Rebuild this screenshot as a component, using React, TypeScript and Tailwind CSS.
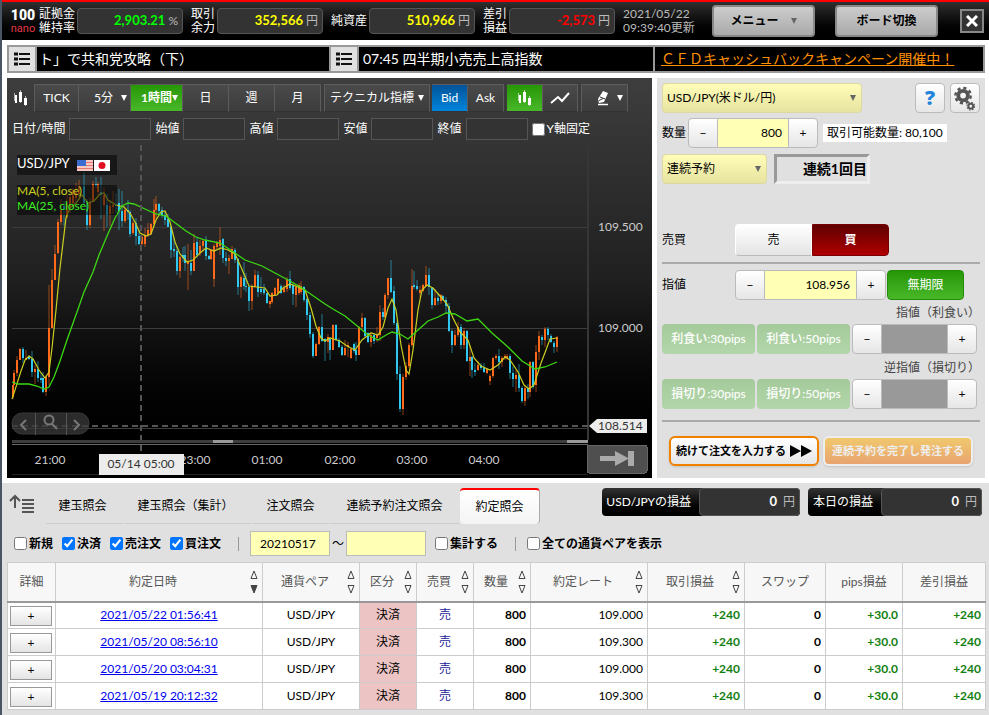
import type { ReactNode } from "react";
import clsx from "clsx";

type Candle = [x: number, wickTop: number, top: number, bottom: number, wickBottom: number, up: 0 | 1];

// x, high, body top, body bottom, low, rising
const candles: Candle[] = [
  [12, 385, 385, 397, 399, 1], [13, 370, 373, 385, 385, 1], [16, 356, 360, 373, 376, 1], [19, 348, 349, 360, 360, 1],
  [22, 347, 349, 358, 363, 0], [25, 350, 358, 360, 360, 1], [28, 355, 357, 359, 360, 0], [31, 351, 359, 372, 377, 0],
  [34, 365, 369, 372, 384, 1], [37, 361, 369, 378, 382, 0], [40, 373, 378, 380, 383, 0], [42, 372, 378, 392, 393, 0],
  [45, 375, 377, 392, 396, 1], [48, 285, 328, 377, 385, 1], [51, 269, 280, 328, 328, 1], [54, 245, 254, 280, 280, 1],
  [57, 219, 222, 253, 254, 1], [60, 199, 210, 222, 225, 1], [63, 201, 206, 209, 226, 0], [66, 195, 203, 215, 218, 1],
  [69, 190, 197, 207, 213, 1], [72, 188, 190, 203, 207, 1], [75, 183, 192, 198, 204, 1], [78, 180, 186, 194, 200, 1],
  [83, 172, 186, 203, 205, 0], [86, 199, 203, 225, 230, 0], [89, 198, 202, 225, 228, 1], [92, 181, 184, 202, 202, 1],
  [95, 177, 184, 185, 188, 0], [97, 182, 184, 192, 196, 1], [100, 177, 192, 195, 219, 0], [103, 187, 195, 205, 231, 1],
  [106, 194, 205, 215, 227, 0], [109, 200, 206, 214, 226, 1], [112, 191, 205, 207, 214, 1], [115, 193, 204, 206, 213, 0],
  [118, 189, 203, 211, 230, 0], [121, 191, 211, 221, 227, 0], [124, 208, 210, 221, 223, 1], [127, 200, 210, 212, 220, 0],
  [129, 210, 212, 234, 237, 0], [132, 221, 223, 233, 235, 1], [135, 218, 223, 236, 245, 0], [138, 230, 236, 244, 245, 0],
  [141, 236, 237, 244, 245, 1], [144, 228, 235, 244, 247, 1], [147, 223, 230, 235, 237, 1], [150, 223, 224, 234, 235, 1],
  [153, 199, 210, 224, 227, 1], [155, 196, 204, 210, 219, 1], [158, 203, 204, 211, 215, 0], [161, 207, 210, 215, 218, 0],
  [164, 211, 215, 220, 225, 0], [167, 214, 219, 227, 227, 0], [170, 225, 227, 250, 258, 0], [173, 238, 249, 251, 257, 0],
  [176, 246, 251, 271, 275, 0], [179, 256, 257, 271, 278, 1], [182, 247, 255, 258, 262, 0], [184, 246, 255, 263, 271, 0],
  [187, 244, 262, 264, 290, 1], [190, 250, 263, 271, 275, 0], [193, 234, 243, 271, 271, 1], [196, 237, 242, 255, 258, 0],
  [199, 240, 246, 253, 256, 1], [202, 240, 241, 246, 250, 1], [205, 236, 240, 256, 260, 0], [208, 255, 256, 259, 260, 0],
  [210, 249, 250, 259, 260, 1], [213, 244, 246, 279, 287, 1], [216, 241, 243, 247, 250, 1], [219, 227, 240, 246, 255, 1],
  [222, 238, 239, 258, 263, 0], [225, 252, 258, 261, 266, 0], [228, 255, 258, 261, 274, 1], [231, 246, 249, 259, 259, 1],
  [234, 248, 250, 260, 263, 0], [237, 258, 259, 287, 295, 0], [240, 275, 277, 287, 298, 1], [243, 262, 278, 286, 290, 0],
  [245, 273, 286, 287, 292, 0], [248, 286, 287, 301, 311, 0], [251, 284, 286, 301, 310, 1], [254, 270, 275, 286, 287, 1],
  [257, 271, 275, 292, 297, 0], [260, 277, 289, 292, 294, 0], [263, 284, 289, 293, 295, 0], [266, 293, 293, 303, 304, 0],
  [269, 301, 301, 304, 308, 1], [271, 292, 293, 302, 304, 1], [274, 287, 288, 295, 296, 1], [277, 278, 279, 293, 294, 1],
  [280, 284, 286, 293, 294, 0], [283, 285, 288, 292, 293, 1], [286, 277, 279, 289, 292, 1], [289, 271, 279, 288, 290, 0],
  [292, 283, 285, 294, 305, 0], [295, 284, 287, 295, 307, 1], [298, 283, 285, 293, 295, 1], [300, 281, 286, 292, 294, 1],
  [303, 286, 287, 300, 302, 0], [306, 297, 299, 315, 320, 0], [309, 312, 315, 334, 338, 0], [312, 332, 334, 356, 358, 0],
  [315, 343, 344, 356, 356, 1], [318, 326, 327, 344, 345, 1], [321, 314, 327, 341, 342, 0], [324, 338, 339, 342, 361, 0],
  [327, 334, 337, 342, 353, 1], [329, 337, 339, 350, 360, 0], [332, 324, 325, 350, 350, 1], [335, 324, 325, 340, 341, 0],
  [338, 338, 340, 347, 348, 0], [341, 345, 347, 355, 356, 0], [344, 340, 348, 355, 356, 1], [347, 342, 345, 347, 357, 1],
  [350, 348, 349, 358, 359, 1], [353, 343, 344, 351, 353, 0], [355, 342, 350, 355, 361, 0], [358, 326, 327, 355, 355, 1],
  [361, 313, 318, 327, 329, 1], [364, 317, 318, 336, 337, 0], [367, 332, 333, 342, 343, 0], [370, 332, 335, 342, 347, 1],
  [373, 333, 335, 341, 344, 0], [376, 327, 335, 338, 342, 1], [379, 305, 312, 335, 341, 1], [382, 308, 312, 317, 320, 0],
  [384, 293, 295, 317, 318, 1], [387, 278, 278, 295, 299, 1], [390, 260, 278, 292, 293, 0], [393, 286, 291, 323, 325, 0],
  [396, 321, 323, 374, 380, 0], [399, 366, 374, 409, 412, 0], [402, 374, 377, 409, 415, 1], [405, 362, 366, 377, 380, 1],
  [408, 343, 345, 366, 368, 1], [411, 269, 286, 345, 347, 1], [413, 271, 285, 287, 289, 0], [416, 280, 286, 289, 291, 0],
  [419, 286, 290, 293, 298, 1], [422, 284, 285, 291, 292, 1], [425, 266, 275, 286, 287, 1], [428, 268, 275, 287, 295, 0],
  [431, 287, 288, 305, 309, 0], [434, 289, 298, 305, 306, 1], [437, 293, 298, 301, 305, 0], [440, 294, 295, 301, 304, 1],
  [442, 295, 296, 300, 301, 0], [445, 297, 300, 306, 313, 0], [448, 303, 306, 331, 332, 0], [451, 329, 331, 345, 353, 0],
  [454, 330, 335, 345, 346, 1], [457, 322, 327, 335, 337, 1], [460, 324, 327, 345, 349, 0], [463, 328, 331, 345, 349, 1],
  [466, 330, 331, 361, 362, 0], [469, 345, 357, 361, 376, 1], [471, 356, 357, 370, 378, 0], [474, 363, 370, 372, 376, 0],
  [477, 361, 365, 370, 371, 1], [480, 363, 365, 368, 370, 0], [483, 363, 368, 372, 373, 0], [486, 368, 369, 373, 374, 1],
  [489, 374, 376, 381, 385, 1], [492, 357, 358, 376, 378, 1], [495, 354, 356, 358, 360, 1], [498, 349, 356, 362, 369, 0],
  [501, 356, 358, 362, 367, 1], [504, 354, 356, 358, 360, 1], [506, 354, 356, 358, 359, 1], [509, 354, 356, 373, 379, 0],
  [512, 366, 373, 379, 387, 0], [515, 370, 375, 379, 392, 1], [518, 364, 375, 388, 392, 0], [521, 386, 388, 401, 403, 0],
  [524, 386, 388, 401, 406, 1], [527, 384, 388, 392, 399, 0], [529, 361, 362, 392, 397, 1], [532, 361, 362, 387, 389, 0],
  [535, 345, 352, 385, 392, 1], [538, 331, 336, 352, 360, 1], [541, 335, 337, 340, 345, 0], [544, 327, 329, 340, 347, 1],
  [547, 327, 329, 335, 340, 0], [550, 334, 336, 342, 343, 0], [553, 341, 343, 347, 353, 0], [556, 336, 337, 347, 352, 1],
];

const ma5 =
  "12,399 15,390 21,371 25,360 29,356 33,359 39,370 45,378 49,372 52,348 56,310 60,268 66,218 70,208 76,203 82,195 88,203 94,201 100,194 104,193 108,200 116,205 124,207 130,213 135,222 140,233 146,236 151,234 156,220 161,212 165,211 170,222 175,242 180,254 187,262 193,260 200,253 206,248 214,251 221,248 228,250 235,254 241,267 249,286 257,287 265,288 270,296 277,295 283,288 290,284 298,287 305,290 311,308 316,326 321,338 325,341 330,338 340,341 347,346 355,350 362,340 371,333 378,335 383,327 388,308 392,299 396,310 401,345 406,370 409,374 413,350 418,310 422,290 427,285 433,288 440,296 447,304 453,318 460,332 468,340 474,358 481,366 490,370 498,365 505,357 510,360 518,372 524,385 529,389 534,385 541,363 546,350 550,339 557,338";

const ma25 =
  "12,382 18,384 29,384 37,386 44,389 49,387 54,377 60,361 67,340 77,312 84,292 93,272 99,255 107,236 115,218 122,206 128,203 134,204 145,209 156,214 166,216 174,222 186,231 196,237 205,240 220,243 232,251 245,260 262,266 275,273 290,281 302,288 312,295 325,304 333,309 345,316 356,325 368,335 378,340 386,335 392,332 400,334 408,339 418,330 428,321 438,317 446,313 455,314 467,321 478,319 492,333 508,347 522,361 535,369 545,367 557,362";

const times = [
  { x: 50, label: "21:00" },
  { x: 195, label: "23:00" },
  { x: 267, label: "01:00" },
  { x: 340, label: "02:00" },
  { x: 412, label: "03:00" },
  { x: 484, label: "04:00" },
];

const trades = [
  { date: "2021/05/22 01:56:41", rate: "109.000" },
  { date: "2021/05/20 08:56:10", rate: "109.300" },
  { date: "2021/05/20 03:04:31", rate: "109.000" },
  { date: "2021/05/19 20:12:32", rate: "109.300" },
];

const columns = [
  { label: "詳細", width: 48 },
  { label: "約定日時", width: 207, sort: "desc" },
  { label: "通貨ペア", width: 97, sort: "none" },
  { label: "区分", width: 57, sort: "none" },
  { label: "売買", width: 57, sort: "none" },
  { label: "数量", width: 57, sort: "none" },
  { label: "約定レート", width: 117, sort: "none" },
  { label: "取引損益", width: 97, sort: "none" },
  { label: "スワップ", width: 81 },
  { label: "pips損益", width: 77 },
  { label: "差引損益", width: 83 },
];

const lightButton = "border border-[#bbb] bg-linear-to-b from-white to-[#e6e6e6]";

function Caret({ className }: { className?: string }) {
  return (
    <svg viewBox="0 0 6 6" className={clsx("h-1.5 w-1.5", className)} fill="currentColor">
      <path d="M0 0h6L3 6z" />
    </svg>
  );
}

function CandleIcon() {
  return (
    <svg viewBox="0 0 14 16" className="h-4 w-3.5" fill="#fff" shapeRendering="crispEdges">
      <path d="M1 5h2v8H1zM5 2h3v10H5zM10 8h3v7h-3z" />
      <path d="M0 3h1v8H0zM6 0h1v13H6zM11 6h1v10h-1z" opacity=".6" />
    </svg>
  );
}

function Summary({ label, value, unit, color }: { label: ReactNode; value: string; unit: string; color: string }) {
  return (
    <div className="flex items-center gap-0.5">
      <span className="leading-[14px] whitespace-nowrap">{label}</span>
      <span className="flex h-[26px] w-[106px] items-center justify-end gap-[3px] rounded-sm border border-[#555] bg-[#333] px-1">
        <b className={clsx("text-[13px]", color)}>{value}</b>
        <span className="text-[#bbb]">{unit}</span>
      </span>
    </div>
  );
}

function NewsButton() {
  return (
    <button aria-label="ニュース一覧" className="flex h-6 w-[26px] shrink-0 items-center justify-center bg-[#e0e0e0]">
      <svg viewBox="0 0 16 14" className="h-3.5 w-4" stroke="#111" strokeWidth="2">
        <path d="M5 2h11M5 7h11M5 12h11" />
        <path d="M0 2h4M0 7h4M0 12h4" strokeWidth="3" />
      </svg>
    </button>
  );
}

function ToolButton({ children, className }: { children: ReactNode; className: string }) {
  return (
    <button
      className={clsx(
        "flex h-7 shrink-0 items-center justify-center border-t border-r border-b border-t-[#5c5c5c] border-r-[#5c5c5c] border-b-[#333] whitespace-nowrap",
        className,
      )}
    >
      {children}
    </button>
  );
}

const tool = "bg-linear-to-b from-[#4a4a4a] to-[#3c3c3c]";
const green = "bg-linear-to-b from-[#269704] to-[#48b828]";

function PriceField({ id, label, className }: { id: string; label: string; className: string }) {
  return (
    <div className="flex shrink-0 items-center gap-1">
      <label htmlFor={id} className="whitespace-nowrap">{label}</label>
      <input id={id} readOnly className={clsx("h-[22px] border border-[#555] bg-[#333]", className)} />
    </div>
  );
}

function Chart() {
  return (
    <section className="min-w-0 flex-1 overflow-hidden bg-linear-to-b from-[#3e3e3e] via-[#202020] to-black text-white">
      <div className="flex pt-1.5 pl-[5px]">
        <div className="flex w-[22px] items-center pl-0.5"><CandleIcon /></div>
        <ToolButton className={clsx(tool, "w-[45px] border-l border-l-[#5c5c5c]")}>TICK</ToolButton>
        <ToolButton className={clsx(tool, "w-[52px] gap-2 pl-3")}>5分<Caret /></ToolButton>
        <ToolButton className={clsx(green, "w-[52px] pl-1.5 font-bold")}>1時間<Caret /></ToolButton>
        <ToolButton className={clsx(tool, "w-[46px]")}>日</ToolButton>
        <ToolButton className={clsx(tool, "w-[46px]")}>週</ToolButton>
        <ToolButton className={clsx(tool, "w-[46px]")}>月</ToolButton>
        <ToolButton className={clsx(tool, "ml-[3px] w-[106px] gap-1 border-l border-l-[#5c5c5c]")}>テクニカル指標<Caret /></ToolButton>
        <ToolButton className="ml-0.5 w-9 bg-linear-to-b from-[#005499] to-[#0085dc]">Bid</ToolButton>
        <ToolButton className={clsx(tool, "w-9")}>Ask</ToolButton>
        <ToolButton className={clsx(green, "ml-[3px] w-9")}><CandleIcon /></ToolButton>
        <ToolButton className={clsx(tool, "w-[35px]")}>
          <svg viewBox="0 0 20 14" className="h-3.5 w-5" fill="none" stroke="#fff" strokeWidth="2">
            <path d="M1 12l7-6 4 4 7-8" />
          </svg>
        </ToolButton>
        <ToolButton className={clsx(tool, "ml-[3px] w-[47px] gap-2 border-l border-l-[#5c5c5c] pl-2.5")}>
          <svg viewBox="0 0 12 15" className="h-[15px] w-3">
            <path d="M6 0l5 2-4 9-5 1-1-4z" fill="#fff" />
            <path d="M3 6l5 2M2 9.500l4-2" stroke="#333" />
            <path d="M1 13.500h10" stroke="#fff" strokeWidth="1.500" />
          </svg>
          <Caret />
        </ToolButton>
      </div>
      <div className="flex items-center gap-1 pt-1.5 pl-[5px]">
        <PriceField id="datetime" label="日付/時間" className="w-[82px]" />
        <PriceField id="open" label="始値" className="w-[62px]" />
        <PriceField id="high" label="高値" className="w-[62px]" />
        <PriceField id="low" label="安値" className="w-[62px]" />
        <PriceField id="close" label="終値" className="w-[62px]" />
        <label className="flex items-center gap-0.5 whitespace-nowrap">
          <input type="checkbox" className="h-[13px] w-[13px]" />
          Y軸固定
        </label>
      </div>
      <svg viewBox="7 140 645 338" className="h-[338px] w-full" preserveAspectRatio="xMinYMin meet" shapeRendering="crispEdges">
        <path d="M12 227h576M12 328h576M12 428h576" stroke="#3c3c3c" strokeWidth="1" />
        <rect x="587" y="145" width="2" height="295" fill="#363636" />
        {candles.map(([x, wickTop, top, bottom, wickBottom, up]) => (
          <g key={x} fill={up ? "#ff6a1a" : "#30c8f0"}>
            <rect x={x} y={wickTop} width="2" height={wickBottom - wickTop} opacity=".28" />
            <rect x={x} y={top} width="2" height={bottom - top} />
          </g>
        ))}
        <g fill="none" shapeRendering="auto">
          <polyline points={ma5} stroke="#cbd020" strokeWidth="1.2" />
          <polyline points={ma25} stroke="#3cd812" strokeWidth="1.3" />
        </g>
        <path d="M141 145v306M12 426h576" stroke="#555" strokeWidth="2" strokeDasharray="6 4" />
        <g fill="#000" opacity=".5">
          <rect x="17" y="155" width="100" height="20" />
          <rect x="17" y="185" width="100" height="30" />
        </g>
        <g fontSize="12">
          <text x="17" y="168" fontSize="13" fill="#fff">USD/JPY</text>
          <text x="17" y="195" fill="#cbd020">MA(5, close)</text>
          <text x="17" y="210" fill="#3cee22">MA(25, close)</text>
        </g>
        <g>
          <rect x="77" y="160" width="16" height="11" fill="#f7c9c4" />
          <path d="M77 162h16M77 165h16M77 168h16" stroke="#e5776c" />
          <rect x="77" y="160" width="9" height="6" fill="#3d6cd0" />
          <rect x="94" y="160" width="16" height="11" fill="#fff" />
          <circle cx="102" cy="165.500" r="3.500" fill="#e01022" shapeRendering="auto" />
        </g>
        <g shapeRendering="auto" fill="none">
          <rect x="12" y="413" width="77" height="21" rx="10" fill="#3a3a3a" stroke="#4c4c4c" opacity=".75" />
          <path d="M35.500 413v22M66.500 413v22" stroke="#555" />
          <path d="M26 420l-5 5 5 5M74 420l5 5-5 5M52 424l5 5" stroke="#777" strokeWidth="2" />
          <circle cx="49" cy="420" r="4.500" stroke="#777" strokeWidth="2" />
        </g>
        <rect x="12" y="440" width="576" height="3" fill="#3d3d3d" />
        <rect x="213" y="440" width="20" height="3" fill="#999" />
        <rect x="567" y="440" width="21" height="3" fill="#999" />
        <rect x="12" y="444" width="576" height="1" fill="#666" />
        <rect x="12" y="474" width="576" height="1" fill="#222" />
        <g fontSize="12" fill="#ccc">
          {times.map((t) => (
            <text key={t.label} x={t.x} y="464" textAnchor="middle">{t.label}</text>
          ))}
          <text x="598" y="231">109.500</text>
          <text x="598" y="332">109.000</text>
        </g>
        <path d="M589 426l8-7h50v14h-50z" fill="#ececec" shapeRendering="auto" />
        <text x="598" y="430" fontSize="12" fill="#333">108.514</text>
        <rect x="99" y="454" width="85" height="21" fill="#ececec" />
        <text x="141" y="468" fontSize="12" fill="#333" textAnchor="middle">05/14 05:00</text>
        <rect x="587" y="445" width="60" height="28" rx="2" fill="#4f4f4f" stroke="#666" />
        <path d="M600 456h15v-5l13 7v-7h6v15h-6v-7l-13 7v-5h-15z" fill="#aaa" shapeRendering="auto" />
      </svg>
    </section>
  );
}

function Stepper({ label, value, field }: { label: string; value?: string; field: string }) {
  return (
    <div className="flex h-[30px]">
      <button aria-label={`${label}を減らす`} className={clsx(lightButton, "w-[30px] rounded-l-sm")}>−</button>
      <input aria-label={label} defaultValue={value} disabled={!value} className={clsx("border-y border-[#bbb] px-1.5 text-right", field)} />
      <button aria-label={`${label}を増やす`} className={clsx(lightButton, "w-[30px] rounded-r-sm")}>+</button>
    </div>
  );
}

function YellowSelect({ label, value, className }: { label: string; value: string; className: string }) {
  return (
    <div className={clsx("relative h-[30px]", className)}>
      <select
        aria-label={label}
        className="h-full w-full appearance-none rounded-sm border border-[#ddd9a0] bg-linear-to-b from-[#fffdb8] to-[#e7e3a0] pl-1"
      >
        <option>{value}</option>
      </select>
      <Caret className="pointer-events-none absolute top-3 right-1.5 text-[#666]" />
    </div>
  );
}

function PipsRow({ kind, side }: { kind: string; side: string }) {
  const button = "h-[30px] flex-1 rounded-sm bg-linear-to-b from-[#a4ca9b] to-[#b2d6a9] font-medium text-white";
  return (
    <div className="flex h-[31px] gap-0.5 pr-[3px]">
      <button className={button}>{kind}:30pips</button>
      <button className={button}>{kind}:50pips</button>
      <Stepper label={side} field="w-[65px] bg-[#999]" />
    </div>
  );
}

function OrderPanel() {
  return (
    <section className="w-[328px] shrink-0 bg-[#e0e0e0] p-[5px]">
      <div className="flex gap-[5px]">
        <YellowSelect label="通貨ペア" value="USD/JPY(米ドル/円)" className="w-[200px]" />
        <button
          aria-label="ヘルプ"
          className={clsx(lightButton, "ml-auto h-[30px] w-[30px] rounded-sm font-['Open_Sans'] text-xl leading-6 font-extrabold text-[#2484dc]")}
        >
          ?
        </button>
        <button aria-label="設定" className={clsx(lightButton, "flex h-[30px] w-[30px] items-center justify-center rounded-sm")}>
          <svg viewBox="0 0 24 26" className="h-[25px] w-6" fill="none" stroke="#555">
            <circle cx="10" cy="10" r="5" strokeWidth="4" />
            <circle cx="10" cy="10" r="8" strokeWidth="2.500" strokeDasharray="3.300 2.983" />
            <circle cx="18" cy="21" r="2.500" strokeWidth="2" />
            <circle cx="18" cy="21" r="4" strokeWidth="1.200" strokeDasharray="1.600 1.540" />
          </svg>
        </button>
      </div>
      <div className="mt-[5px] flex items-center">
        <span className="w-[26px]">数量</span>
        <Stepper label="数量" value="800" field="w-[70px] bg-[#ffffb5]" />
        <span className="ml-[5px] bg-white px-1 leading-[18px]">取引可能数量: 80,100</span>
      </div>
      <div className="mt-1.5 flex gap-[7px]">
        <YellowSelect label="注文方式" value="連続予約" className="w-[105px]" />
        <span className="flex h-[30px] w-24 items-center justify-end border-3 border-t-[#999] border-r-[#eee] border-b-[#eee] border-l-[#999] text-sm font-bold">
          連続1回目
        </span>
      </div>
      <div className="mt-10 flex h-8 items-center">
        <span className="w-[73px]">売買</span>
        <button className="h-full w-[77px] rounded-l-sm border border-white border-b-[#bbb] bg-linear-to-b from-white to-[#e4e4e4]">売</button>
        <button className="h-full w-[77px] rounded-r-sm border border-[#700] bg-linear-to-b from-[#600000] to-[#b00000] font-bold text-white">買</button>
      </div>
      <hr className="mt-1.5 border-t-2 border-[#aaa]" />
      <div className="mt-1.5 flex items-center">
        <span className="w-[73px]">指値</span>
        <Stepper label="指値" value="108.956" field="w-[91px] bg-[#ffffb5]" />
        <button className={clsx(green, "ml-px h-[30px] w-[77px] rounded-sm border border-[#228b08] text-white")}>無期限</button>
      </div>
      <p className="pt-0.5 text-right leading-[22px] text-[#444]">指値（利食い）</p>
      <PipsRow kind="利食い" side="指値（利食い）" />
      <p className="pt-0.5 text-right leading-[22px] text-[#444]">逆指値（損切り）</p>
      <PipsRow kind="損切り" side="逆指値（損切り）" />
      <hr className="mt-2.5 border-t-2 border-[#aaa]" />
      <div className="mt-3.5 flex gap-1 px-[7px] text-[11px]">
        <button className="flex h-[30px] flex-1 items-center justify-center gap-1 rounded-md border-2 border-[#f08000] bg-linear-to-b from-white to-[#e6e6e6] font-bold whitespace-nowrap shadow">
          続けて注文を入力する
          <svg viewBox="0 0 22 12" className="h-3 w-[22px]"><path d="M0 0l11 6-11 6zM11 0l11 6-11 6z" /></svg>
        </button>
        <button className="h-[30px] flex-1 rounded-md border-2 border-[#eee] bg-linear-to-b from-[#f0c86c] to-[#e8a470] font-bold whitespace-nowrap text-[#eee] shadow">
          連続予約を完了し発注する
        </button>
      </div>
    </section>
  );
}

function Profit({ label, className }: { label: string; className: string }) {
  return (
    <div className="flex h-7 shrink-0 overflow-hidden rounded-sm bg-linear-to-b from-[#333] to-black text-white">
      <span className={clsx("flex items-center whitespace-nowrap", className)}>{label}</span>
      <span className="flex w-[101px] items-center justify-end gap-1.5 rounded-sm border border-[#555] bg-[#333] pr-1">
        <b className="text-[13px]">0</b>
        <span className="text-[#bbb]">円</span>
      </span>
    </div>
  );
}

function Check({ label, checked }: { label: string; checked?: boolean }) {
  return (
    <label className="flex items-center gap-0.5 font-bold whitespace-nowrap">
      <input type="checkbox" defaultChecked={checked} className="h-[13px] w-[13px] accent-[#0075ff]" />
      {label}
    </label>
  );
}

function SortMark({ desc }: { desc: boolean }) {
  return (
    <svg viewBox="0 0 8 26" className="mr-1 ml-auto h-[26px] w-2 shrink-0" fill="none" stroke="#444">
      <path d="M1 9.500L4 2l3 7.500z" />
      <path d="M1 16.500L4 24l3-7.500z" fill={desc ? "#444" : "none"} />
    </svg>
  );
}

function Trades() {
  const cell = "border border-[#ccc] px-1";
  return (
    <table className="w-full table-fixed border-collapse bg-white">
      <colgroup>
        {columns.map((c) => (
          <col key={c.label} style={{ width: c.width }} />
        ))}
      </colgroup>
      <thead className="border-b-2 border-[#999] bg-[#f7f7f7] text-[#555]">
        <tr className="h-[39px]">
          {columns.map((c) => (
            <th key={c.label} className="border-x border-t border-[#ccc] p-0 font-normal whitespace-nowrap">
              <div className="flex items-center">
                <span className="flex-1">{c.label}</span>
                {c.sort && <SortMark desc={c.sort === "desc"} />}
              </div>
            </th>
          ))}
        </tr>
      </thead>
      <tbody>
        {trades.map((t) => (
          <tr key={t.date} className="h-[27px] text-right">
            <td className="border border-[#ccc] px-0.5">
              <button aria-label="詳細を開く" className="mt-0.5 block h-5 w-[42px] border border-[#999] bg-linear-to-b from-white to-[#e4e4e4]">+</button>
            </td>
            <td className={clsx(cell, "text-center")}><a href="#" className="text-[#00e] underline">{t.date}</a></td>
            <td className={clsx(cell, "text-center")}>USD/JPY</td>
            <td className={clsx(cell, "bg-[#edc4c4] text-center")}>決済</td>
            <td className={clsx(cell, "text-center text-[#229]")}>売</td>
            <td className={clsx(cell, "font-bold")}>800</td>
            <td className={cell}>{t.rate}</td>
            <td className={clsx(cell, "font-bold text-[#118011]")}>+240</td>
            <td className={clsx(cell, "font-bold")}>0</td>
            <td className={clsx(cell, "font-bold text-[#118011]")}>+30.0</td>
            <td className={clsx(cell, "font-bold text-[#118011]")}>+240</td>
          </tr>
        ))}
      </tbody>
    </table>
  );
}

export default function App() {
  const tab = "flex h-full items-center justify-center border-b border-[#ccc] whitespace-nowrap";
  const headButton = "h-8 rounded-sm border-2 border-[#888] bg-linear-to-b from-[#ccc] to-[#aaa] font-bold text-black";
  return (
    <div className="flex min-h-screen flex-col bg-[#4a5564] pl-0.5 font-['Lato','Noto_Sans_CJK_JP',sans-serif] text-xs text-black">
      <header className="flex h-10 items-center border-t-2 border-[#f00] bg-linear-to-b from-[#303030] to-black px-[5px] text-white">
        <div className="w-8 shrink-0 text-center font-['Roboto']">
          <div className="text-sm leading-4 font-black">100</div>
          <div className="text-[11px] leading-3 text-[#e03848]">nano</div>
        </div>
        <div className="flex flex-1 items-center gap-2">
          <Summary label={<>証拠金<br />維持率</>} value="2,903.21" unit="%" color="text-[#0f0]" />
          <Summary label={<>取引<br />余力</>} value="352,566" unit="円" color="text-[#ff0]" />
          <Summary label="純資産" value="510,966" unit="円" color="text-[#ff0]" />
          <Summary label={<>差引<br />損益</>} value="-2,573" unit="円" color="text-[#f00]" />
          <p className="leading-[14px] whitespace-nowrap text-[#bbb]">2021/05/22<br />09:39:40更新</p>
        </div>
        <button className={clsx(headButton, "flex w-[103px] items-center justify-center gap-3")}>メニュー<Caret className="text-[#666]" /></button>
        <button className={clsx(headButton, "ml-5 w-[103px]")}>ボード切換</button>
        <button aria-label="閉じる" className="ml-[22px] flex h-6 w-6 items-center justify-center border-2 border-[#888] bg-[#333]">
          <svg viewBox="0 0 12 12" className="h-3 w-3" stroke="#fff" strokeWidth="3"><path d="M1 1l10 10M11 1L1 11" /></svg>
        </button>
      </header>

      <div className="flex flex-col gap-[5px] bg-white py-[5px] pr-1 pl-[5px]">
        <div className="flex h-7 items-center border-2 border-[#999] bg-black text-sm text-white">
          <NewsButton />
          <span className="flex-1 border-x-2 border-[#999] pl-0.5 leading-6 whitespace-nowrap">ト」で共和党攻略（下）</span>
          <NewsButton />
          <span className="flex-1 border-l-2 border-[#999] pl-1 leading-6 whitespace-nowrap">07:45 四半期小売売上高指数</span>
          <a href="#" className="w-[330px] border-l-2 border-[#999] pl-1.5 leading-6 whitespace-nowrap text-[#ff9000] underline">
            ＣＦＤキャッシュバックキャンペーン開催中！
          </a>
        </div>
        <main className="flex h-[400px] gap-[5px]">
          <Chart />
          <OrderPanel />
        </main>
      </div>

      <section className="flex-1 bg-[#e0e0e0] pr-1 pl-[5px]">
        <div className="flex pt-[5px]">
          <svg viewBox="0 0 26 20" className="mt-1.5 mr-[11px] ml-0.5 h-5 w-[26px]" fill="none" stroke="#555" strokeWidth="2">
            <path d="M6 14V2M1 7l5-5 5 5M13 6h12M13 10h12M13 14h12M13 18h12" />
          </svg>
          <nav className="flex h-9 gap-px">
            <button className={clsx(tab, "w-[77px] pr-1")}>建玉照会</button>
            <button className={clsx(tab, "w-[127px] pr-1")}>建玉照会（集計）</button>
            <button className={clsx(tab, "w-[77px]")}>注文照会</button>
            <button className={clsx(tab, "w-[129px]")}>連続予約注文照会</button>
            <button className="flex h-full w-20 items-center justify-center rounded-sm border-t-2 border-r border-[#aaa] border-t-[#f00] bg-linear-to-b from-white to-[#f4f4f4]">約定照会</button>
          </nav>
          <div className="ml-auto flex gap-2 pr-[3px]">
            <Profit label="USD/JPYの損益" className="pr-2 pl-1" />
            <Profit label="本日の損益" className="pr-2 pl-[5px]" />
          </div>
        </div>
        <div className="mt-[7px] mb-1.5 flex h-[25px] items-center gap-[9px] pl-[7px]">
          <Check label="新規" />
          <Check label="決済" checked />
          <Check label="売注文" checked />
          <Check label="買注文" checked />
          <span className="mr-0.5 ml-2 h-3.5 w-px bg-[#999]" />
          <div className="flex items-center gap-0.5">
            <input aria-label="開始日" defaultValue="20210517" className="h-[25px] w-20 border border-[#bbb] bg-[#ffffb5] px-[9px]" />
            <span className="w-3 text-center">～</span>
            <input aria-label="終了日" className="h-[25px] w-20 border border-[#bbb] bg-[#ffffb5] px-[9px]" />
          </div>
          <Check label="集計する" />
          <span className="mr-0.5 ml-2 h-3.5 w-px bg-[#999]" />
          <Check label="全ての通貨ペアを表示" />
        </div>
        <Trades />
      </section>
    </div>
  );
}
